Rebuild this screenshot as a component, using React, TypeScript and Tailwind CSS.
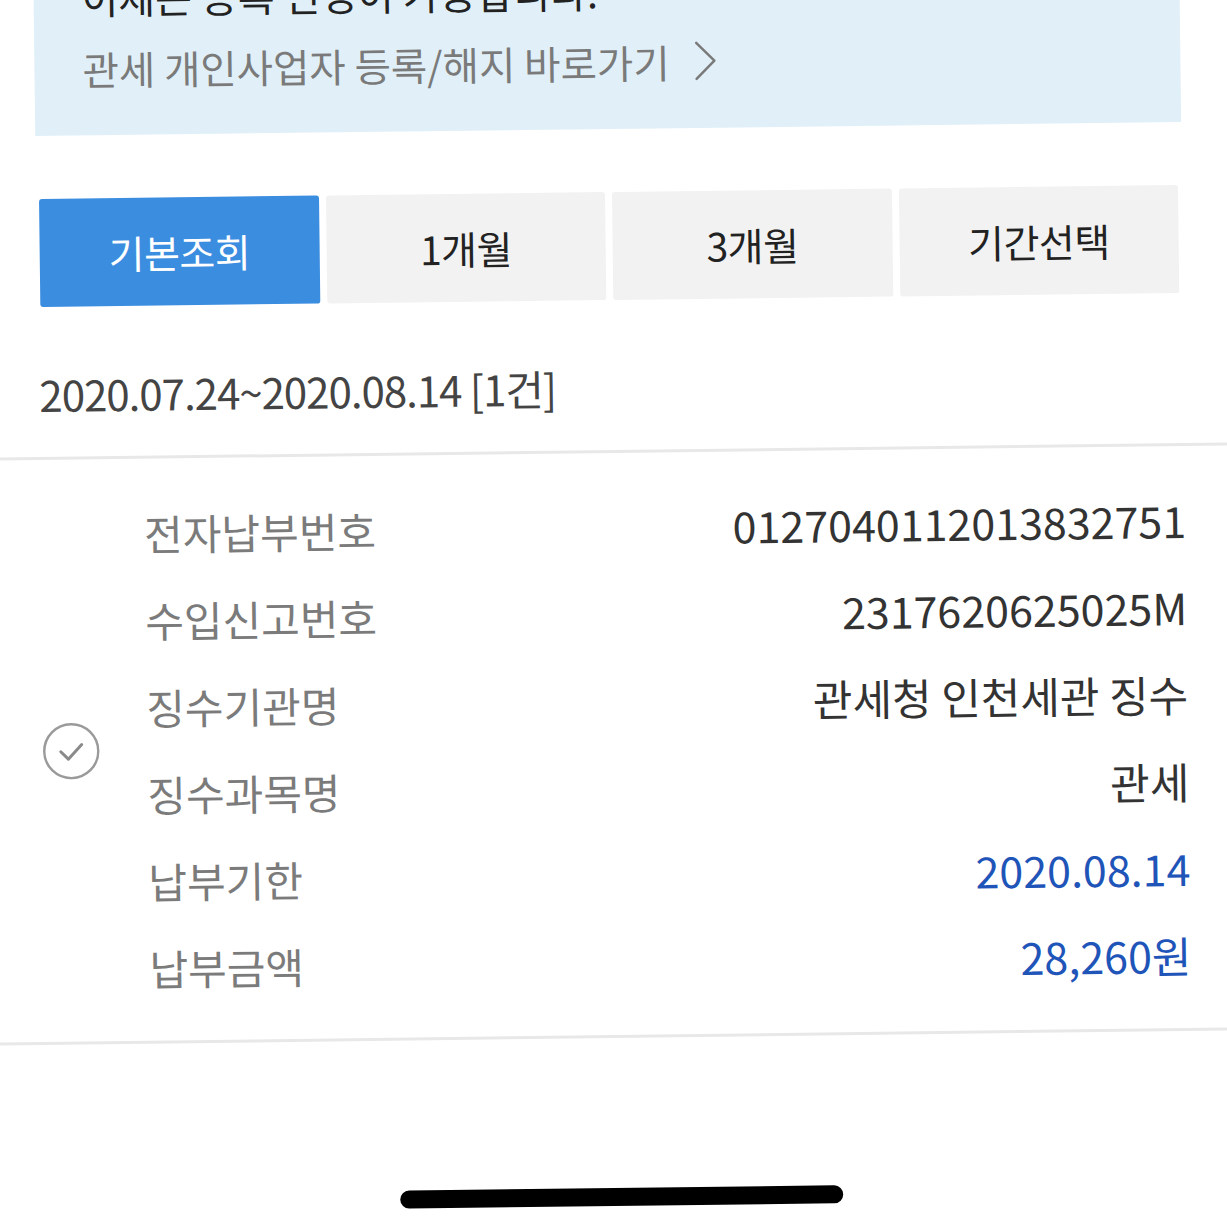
import React from "react"

const font = { fontFamily: '"Noto Sans CJK KR", "Noto Sans", sans-serif' }

const rows: { label: string; value: string; blue?: boolean }[] = [
  { label: "전자납부번호", value: "0127040112013832751" },
  { label: "수입신고번호", value: "2317620625025M" },
  { label: "징수기관명", value: "관세청 인천세관 징수" },
  { label: "징수과목명", value: "관세" },
  { label: "납부기한", value: "2020.08.14", blue: true },
  { label: "납부금액", value: "28,260원", blue: true },
]

const tabs = ["기본조회", "1개월", "3개월", "기간선택"]

export default function App() {
  return (
    <div className="w-[1227px] h-[1223px] overflow-hidden bg-white" style={font}>
      <div className="-rotate-[0.7deg] flex flex-col">
        {/* notice box */}
        <div className="ml-[41px] mr-[40px] -mt-[34px] bg-[#e1f0f8] pl-[48px] pb-[42px] flex flex-col">
          <div className="h-[50px] leading-[50px] text-[40px] text-[#222] whitespace-nowrap">
            이제는 등록 변경이 가능합니다.
          </div>
          <div className="mt-[21px] h-[50px] flex items-center gap-[24px] text-[39.5px] text-[#7a7a7a] whitespace-nowrap">
            <span>관세 개인사업자 등록/해지 바로가기</span>
            <svg width="24" height="42" viewBox="0 0 24 42" fill="none">
              <path d="M3 3 L21 21 L3 39" stroke="#7a7a7a" strokeWidth="2.5" strokeLinecap="round" strokeLinejoin="round" />
            </svg>
          </div>
        </div>

        {/* tabs */}
        <div className="mt-[63px] pl-[44px] pr-[44px] grid grid-cols-4 gap-[7px]">
          {tabs.map((t, i) => (
            <button
              key={t}
              className={`h-[108px] rounded-[3px] text-[39px] tracking-[-0.5px] ${
                i === 0 ? "bg-[#3b8de0] text-white" : "bg-[#f2f2f2] text-[#222]"
              }`}
            >
              {t}
            </button>
          ))}
        </div>

        {/* period */}
        <div className="mt-[62px] pl-[42px] h-[50px] leading-[50px] text-[42px] text-[#444] tracking-[-1px]">
          2020.07.24~2020.08.14 [1건]
        </div>

        <div className="mt-[38px] h-[3px] bg-[#e8e8e8] -mx-[20px]" />

        {/* detail */}
        <div className="py-[30px] pl-[41px] pr-[40px] flex items-center">
          <svg width="57" height="57" viewBox="0 0 57 57" fill="none" className="shrink-0">
            <circle cx="28.5" cy="28.5" r="27" stroke="#9a9a9a" strokeWidth="2.5" />
            <path d="M18 29 L25.5 36.5 L39 22" stroke="#8a8a8a" strokeWidth="3" strokeLinecap="round" strokeLinejoin="round" />
          </svg>
          <div className="ml-[47px] flex-1 flex flex-col">
            {rows.map((r) => (
              <div key={r.label} className="h-[87px] flex items-center justify-between">
                <span className="text-[42px] text-[#7b7b7b]">{r.label}</span>
                <span className={`text-[43px] ${r.blue ? "text-[#1f55b8]" : "text-[#333]"}`}>
                  {r.value}
                </span>
              </div>
            ))}
          </div>
        </div>

        <div className="h-[3px] bg-[#e8e8e8] -mx-[20px]" />

        {/* home indicator */}
        <div className="mt-[150px] flex justify-center pl-[2px]">
          <div className="w-[443px] h-[18px] rounded-full bg-black" />
        </div>
      </div>
    </div>
  )
}
